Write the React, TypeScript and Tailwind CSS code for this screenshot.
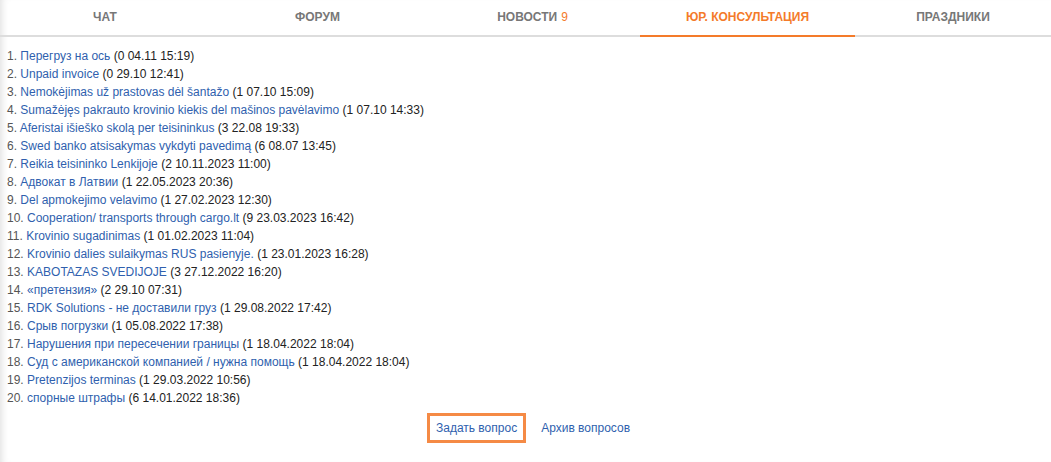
import React from "react";

const tabs = [
  { label: "Чат", w: "w-[210px]" },
  { label: "Форум", w: "w-[215px]" },
  { label: "Новости", w: "w-[215px]", badge: "9" },
  { label: "Юр. консультация", w: "w-[215px]", active: true },
  { label: "Праздники", w: "flex-1" },
];

const topics: [string, string][] = [
  ["Перегруз на ось", "0 04.11 15:19"],
  ["Unpaid invoice", "0 29.10 12:41"],
  ["Nemokėjimas už prastovas dėl šantažo", "1 07.10 15:09"],
  ["Sumažėjęs pakrauto krovinio kiekis del mašinos pavėlavimo", "1 07.10 14:33"],
  ["Aferistai išieško skolą per teisininkus", "3 22.08 19:33"],
  ["Swed banko atsisakymas vykdyti pavedimą", "6 08.07 13:45"],
  ["Reikia teisininko Lenkijoje", "2 10.11.2023 11:00"],
  ["Адвокат в Латвии", "1 22.05.2023 20:36"],
  ["Del apmokejimo velavimo", "1 27.02.2023 12:30"],
  ["Cooperation/ transports through cargo.lt", "9 23.03.2023 16:42"],
  ["Krovinio sugadinimas", "1 01.02.2023 11:04"],
  ["Krovinio dalies sulaikymas RUS pasienyje.", "1 23.01.2023 16:28"],
  ["KABOTAZAS SVEDIJOJE", "3 27.12.2022 16:20"],
  ["«претензия»", "2 29.10 07:31"],
  ["RDK Solutions - не доставили груз", "1 29.08.2022 17:42"],
  ["Срыв погрузки", "1 05.08.2022 17:38"],
  ["Нарушения при пересечении границы", "1 18.04.2022 18:04"],
  ["Суд с американской компанией / нужна помощь", "1 18.04.2022 18:04"],
  ["Pretenzijos terminas", "1 29.03.2022 10:56"],
  ["спорные штрафы", "6 14.01.2022 18:36"],
];

export default function App() {
  return (
    <div className="h-[462px] w-full overflow-hidden bg-white font-['Liberation_Sans',Arial,sans-serif] shadow-[inset_7px_0_7px_-5px_rgba(0,0,0,0.12)]">
      {/* вкладки */}
      <nav className="flex h-[37px] border-b-2 border-[#dddddd]">
        {tabs.map((t) => (
          <div
            key={t.label}
            className={`${t.w} -mb-[2px] flex shrink-0 justify-center pt-[8px] text-[12px] font-bold uppercase ${
              t.active ? "border-b-2 border-[#f47b2a] text-[#f47b2a]" : "text-[#777777]"
            }`}
          >
            <span>
              {t.label}
              {t.badge && <span className="ml-[4px] font-normal text-[#f47b2a]">{t.badge}</span>}
            </span>
          </div>
        ))}
      </nav>

      {/* список вопросов */}
      <ol className="px-[7px] pt-[10px] text-[12px] leading-[18px] text-[#222222]">
        {topics.map(([title, meta], i) => (
          <li key={i}>
            <span className="text-[#555555]">{i + 1}. </span>
            <a href="#" className="text-[#2f5fae]">
              {title}
            </a>{" "}
            ({meta})
          </li>
        ))}
      </ol>

      <div className="mt-[6px] ml-[6px] flex items-center justify-center gap-[15px] text-[12px]">
        <a href="#" className="border-[3px] border-[#f58a45] px-[6px] py-[3px] text-[#2f5fae]">
          Задать вопрос
        </a>
        <a href="#" className="text-[#2f5fae]">
          Архив вопросов
        </a>
      </div>
    </div>
  );
}
